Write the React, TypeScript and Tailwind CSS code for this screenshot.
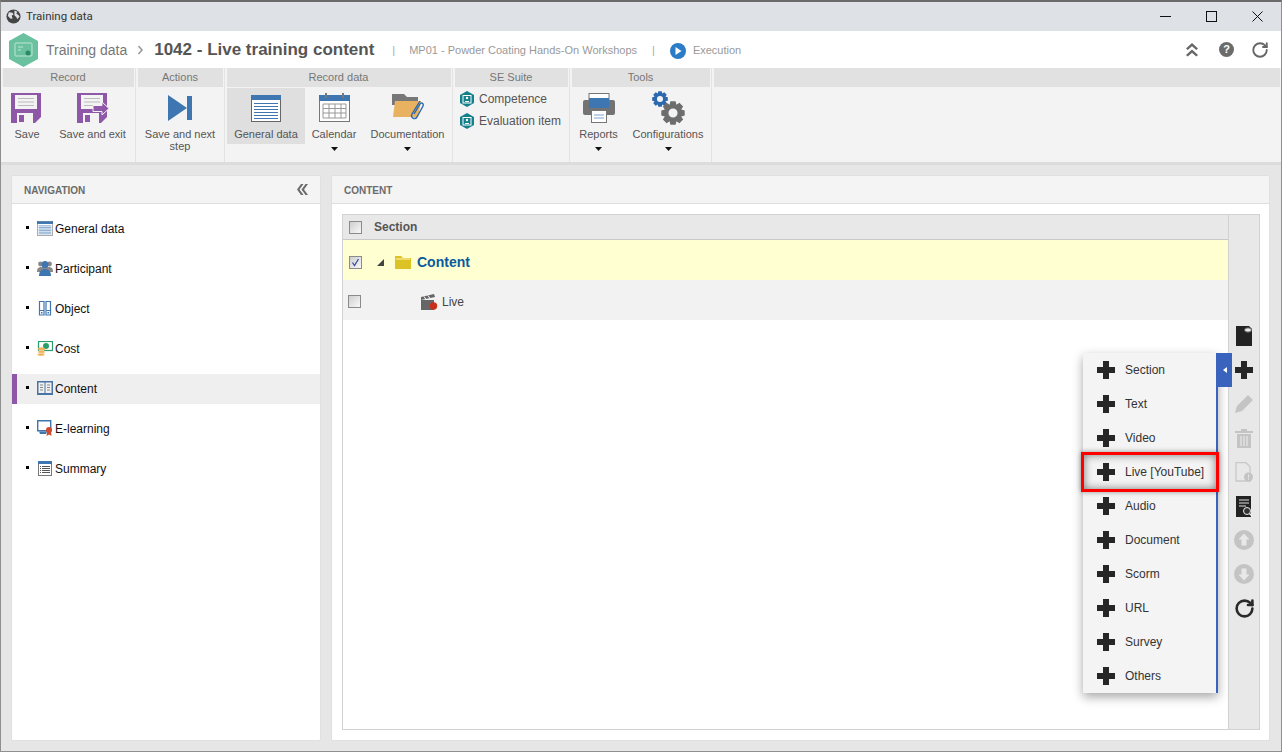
import React from 'react';
import { RotateCw } from 'lucide-react';

const Caret = () => (
  <svg width="7" height="4" viewBox="0 0 7 4" className="mt-[7px]"><path d="M0 0h7L3.5 4z" fill="#111" /></svg>
);

const SaveIcon = ({ exit }: { exit?: boolean }) => (
  <svg width="32" height="30" viewBox="0 0 32 30">
    <path d="M0 0h30v24l-6 6H0z" fill="#8e57a8" />
    <rect x="4" y="2" width="22" height="14" fill="#f3f3f3" />
    <path d="M7 5.500h16M7 9h16M7 12.500h16" stroke="#bbb" strokeWidth="1" />
    <rect x="6" y="20" width="16" height="10" fill="#f3f3f3" />
    <rect x="8" y="22" width="5" height="7" fill="#8e57a8" />
    {exit && <path d="M16 12.500h9v-3.500l7 6.500-7 6.500v-3.500h-9z" fill="#8e57a8" stroke="#f3f3f3" strokeWidth="1" />}
  </svg>
);

const DataIcon = ({ w = 30, h = 27 }: { w?: number; h?: number }) => (
  <svg width={w} height={h} viewBox="0 0 30 27">
    <rect x="0.5" y="0.5" width="29" height="26" fill="#fff" stroke="#666" />
    <rect width="30" height="5" fill="#3d76b0" />
    <path d="M3 8.500h24M3 11.500h24M3 14.500h24M3 17.500h24M3 20.500h24M3 23.500h24" stroke="#3d76b0" strokeWidth="1.200" />
  </svg>
);

const CalendarIcon = () => (
  <svg width="31" height="29" viewBox="0 0 31 29">
    <rect x="0.5" y="2.500" width="30" height="26" fill="#fff" stroke="#777" />
    <rect y="2" width="31" height="6" fill="#3d76b0" />
    <path d="M7 0v5M24 0v5" stroke="#777" strokeWidth="2" />
    <path d="M4 11h23v14H4zM4 15.500h23M4 20h23M10 11v14M16 11v14M22 11v14" fill="none" stroke="#999" />
  </svg>
);

const DocumentationIcon = () => (
  <svg width="32" height="30" viewBox="0 0 32 30">
    <path d="M0 1h12l3 3h11v8H0z" fill="#777" />
    <path d="M3 8h26l-3 16H1z" fill="#e8b261" />
    <path d="M28 8l-8 13c-2 4 3 6 5 3l6-11c1-3-2-4-3-2l-6 10" fill="none" stroke="#2c68ad" strokeWidth="1.400" />
  </svg>
);

const BadgeIcon = () => (
  <svg width="14" height="16" viewBox="0 0 14 16">
    <path d="M7 0l7 4v8l-7 4-7-4V4z" fill="#13808c" />
    <rect x="3" y="4.500" width="8" height="7.500" fill="none" stroke="#fff" />
    <circle cx="7" cy="7" r="1.200" fill="#fff" />
    <path d="M5 10.500h4" stroke="#fff" />
  </svg>
);

const PrinterIcon = () => (
  <svg width="32" height="30" viewBox="0 0 32 30">
    <rect y="7" width="32" height="15" rx="2" fill="#737373" />
    <rect x="6" y="0.500" width="20" height="6" fill="#fff" stroke="#777" />
    <rect x="6" y="5" width="20" height="10" fill="#3d76b0" />
    <rect x="8.500" y="17.500" width="15" height="12" fill="#fff" stroke="#777" />
    <path d="M11 22h10M11 25h10" stroke="#7fa6cf" />
  </svg>
);

// toothed wheel outline, hole cut out with evenodd
const gearPath = (cx: number, cy: number, r: number, teeth: number) => {
  const inner = r * 0.74;
  const hole = r * 0.38;
  const step = (Math.PI * 2) / teeth;
  const pts: string[] = [];
  for (let i = 0; i < teeth; i++) {
    const a = i * step;
    [[inner, -0.5], [r, -0.28], [r, 0.28], [inner, 0.5]].forEach(([rad, k]) => {
      const t = a + k * step;
      pts.push(`${(cx + rad * Math.cos(t)).toFixed(2)} ${(cy + rad * Math.sin(t)).toFixed(2)}`);
    });
  }
  const circle = `M${cx + hole} ${cy}a${hole} ${hole} 0 1 0 ${-2 * hole} 0a${hole} ${hole} 0 1 0 ${2 * hole} 0z`;
  return `M${pts.join('L')}z${circle}`;
};

const ConfigIcon = () => (
  <svg width="33" height="34" viewBox="0 0 33 34">
    <path d={gearPath(8, 8, 8, 8)} fill="#2c68ad" fillRule="evenodd" />
    <path d={gearPath(21, 22, 12, 8)} fill="#6d6d6d" fillRule="evenodd" />
  </svg>
);

const Group = ({ title, width, children, last }: { title: string; width: string; children?: React.ReactNode; last?: boolean }) => (
  <div className={`flex flex-col shrink-0 ${width} ${last ? 'grow' : 'border-r border-[#e3e3e3]'}`}>
    <div className="h-[19px] shrink-0 mx-[1.5px] bg-[#e1e1e1] flex items-center justify-center text-[11px] text-[#777]">{title}</div>
    <div className="flex flex-1 items-start">{children}</div>
  </div>
);

const RibbonBtn = ({ icon, label, width, caret, active }: { icon: React.ReactNode; label: React.ReactNode; width: string; caret?: boolean; active?: boolean }) => (
  <div className={`flex flex-col items-center shrink-0 text-[11px] text-[#555] ${width}`}>
    <div className={`w-full flex flex-col items-center ${active ? 'bg-[#dfdfdf] h-[56px] mt-[1px]' : ''}`}>
      <div className={`${active ? 'h-[40px]' : 'h-[41px]'} flex items-center justify-center`}>{icon}</div>
      <div className="whitespace-nowrap text-center leading-[12px]">{label}</div>
    </div>
    {caret && <Caret />}
  </div>
);

const navIcons: Record<string, React.ReactNode> = {
  'General data': <DataIcon w={16} h={15} />,
  Participant: (
    <svg width="16" height="16" viewBox="0 0 16 16">
      <circle cx="3.500" cy="4" r="2.400" fill="#888" /><circle cx="12.500" cy="4" r="2.400" fill="#888" />
      <path d="M0 11c0-3 2-4 4-4h8c2 0 4 1 4 4v1H0z" fill="#888" />
      <circle cx="8" cy="4.500" r="3.500" fill="#3d76b0" /><path d="M2 16c0-5 3-7 6-7s6 2 6 7z" fill="#3d76b0" />
    </svg>
  ),
  Object: (
    <svg width="16" height="15" viewBox="0 0 16 15">
      <path d="M2.500.5h4.500v13.500H2.500zM9 .5h4.500v13.500H9z" fill="#fff" stroke="#3d76b0" strokeWidth="1.200" />
      <path d="M3 9.500h4M9.500 9.500h4" stroke="#3d76b0" /><rect x="4" y="11" width="1.500" height="1.500" fill="#3d76b0" /><rect x="10.500" y="11" width="1.500" height="1.500" fill="#3d76b0" />
    </svg>
  ),
  Cost: (
    <svg width="16" height="15" viewBox="0 0 16 15">
      <rect x="1.500" y="0.500" width="14" height="9" fill="#fff" stroke="#2a9d6a" strokeWidth="1.200" />
      <circle cx="9" cy="5" r="3" fill="#2a9d6a" />
      <ellipse cx="4.500" cy="8" rx="3.500" ry="1.700" fill="#eeb058" /><ellipse cx="4.500" cy="11" rx="3.500" ry="1.700" fill="#eeb058" stroke="#fff" strokeWidth=".5" /><ellipse cx="4" cy="13.500" rx="3.500" ry="1.500" fill="#eeb058" stroke="#fff" strokeWidth=".5" />
    </svg>
  ),
  Content: (
    <svg width="16" height="14" viewBox="0 0 16 14">
      <rect width="16" height="14" fill="#4a74a3" /><rect x="1.500" y="1.500" width="6" height="10.500" fill="#f0f0f0" /><rect x="8.500" y="1.500" width="6" height="10.500" fill="#f0f0f0" />
      <path d="M3 4h3M3 6.500h3M3 9h3M10 4h3M10 6.500h3M10 9h3" stroke="#888" />
    </svg>
  ),
  'E-learning': (
    <svg width="16" height="16" viewBox="0 0 16 16">
      <path d="M.7.7h13v10h-13z" fill="#fff" stroke="#3d76b0" strokeWidth="1.400" /><path d="M2 11.500h8l-1 2.500H3z" fill="#3d76b0" />
      <circle cx="12" cy="10" r="3" fill="#cf4a2e" /><path d="M10 12l-.5 4 2.500-1.500 2.500 1.500-.5-4z" fill="#cf4a2e" />
    </svg>
  ),
  Summary: (
    <svg width="14" height="15" viewBox="0 0 14 15">
      <rect x=".5" y=".5" width="13" height="14" fill="#fff" stroke="#777" /><rect width="14" height="3" fill="#3d76b0" />
      <path d="M4 5.500h8M4 7.500h8M4 9.500h8M4 11.500h8M2 5.500h1M2 7.500h1M2 9.500h1M2 11.500h1" stroke="#555" />
    </svg>
  ),
};

const navItems = ['General data', 'Participant', 'Object', 'Cost', 'Content', 'E-learning', 'Summary'];

const menuItems = ['Section', 'Text', 'Video', 'Live [YouTube]', 'Audio', 'Document', 'Scorm', 'URL', 'Survey', 'Others'];

const PlusIcon = ({ color = '#262626' }: { color?: string }) => (
  <svg width="18" height="18" viewBox="0 0 18 18"><path d="M6 0h6v6h6v6h-6v6H6v-6H0V6h6z" fill={color} /></svg>
);

const SideBtn = ({ children }: { children: React.ReactNode }) => (
  <div className="h-[34px] flex items-center justify-center">{children}</div>
);

const Check = ({ checked }: { checked?: boolean }) => (
  <div className="w-[13px] h-[13px] border border-[#8a8a8a] bg-gradient-to-br from-[#cfcfcf] to-[#f8f8f8] flex items-center justify-center shrink-0">
    {checked && (
      <svg width="9" height="9" viewBox="0 0 9 9"><path d="M1.500 4.500l2 3 4-6.500" fill="none" stroke="#3a4fa0" strokeWidth="1.300" /></svg>
    )}
  </div>
);

export default function App() {
  return (
    <div className="relative w-[1282px] h-[752px] overflow-hidden bg-[#e6e6e6] border-l border-r border-b border-t-2 border-[#8f8f8f] border-t-[#6a6a6a] flex flex-col font-['Liberation_Sans',sans-serif]">
      {/* title bar */}
      <div className="h-[29px] shrink-0 bg-[#dee1e6] flex items-center pl-[5px]">
        <svg width="15" height="15" viewBox="0 0 16 16">
          <circle cx="8" cy="8" r="7.500" fill="#444" />
          <path d="M3 3.500l4 .5 1 2-2 1 1 3-2 .5-3-3zM9 1.500l3 1.500-1 2 2 1 1.500 2-2.500 3-1-2.500-2-1.500z" fill="#dee1e6" />
        </svg>
        <span className="ml-[5px] text-[11.500px] text-[#333] font-['Roboto',sans-serif]">Training data</span>
        <div className="ml-auto flex items-center">
          <div className="w-[46px] flex justify-center">
            <svg width="11" height="11" viewBox="0 0 11 11" shapeRendering="crispEdges"><path d="M0 5.500h11" stroke="#111" /></svg>
          </div>
          <div className="w-[46px] flex justify-center">
            <svg width="11" height="11" viewBox="0 0 11 11" shapeRendering="crispEdges"><rect x=".5" y=".5" width="10" height="10" fill="none" stroke="#111" /></svg>
          </div>
          <div className="w-[46px] flex justify-center">
            <svg width="11" height="11" viewBox="0 0 11 11"><path d="M.5.5l10 10M10.500.5l-10 10" stroke="#111" /></svg>
          </div>
          <div className="w-[1px]" />
        </div>
      </div>

      {/* header */}
      <div className="h-[37px] shrink-0 bg-white flex items-center pl-[7px]">
        <svg width="31" height="34" viewBox="0 0 31 34">
          <path d="M15.500 0L30 8v18l-14.500 8L1 26V8z" fill="#69c19f" />
          <rect x="7" y="10" width="17" height="13" rx="1" fill="none" stroke="#bfe6d6" />
          <path d="M10 14h5M10 17h3" stroke="#bfe6d6" />
          <circle cx="20" cy="20" r="2.500" fill="#2e8a66" />
        </svg>
        <span className="ml-[7px] mt-[1px] text-[14px] text-[#777]">Training data</span>
        <svg className="ml-[10px]" width="7" height="10" viewBox="0 0 7 10"><path d="M1.500 1l3.500 4-3.500 4" fill="none" stroke="#999" strokeWidth="1.600" /></svg>
        <span className="ml-[10px] text-[17px] font-bold text-[#555]">1042 - Live training content</span>
        <span className="ml-[18px] mt-[2px] text-[11px] text-[#aaa]">|</span>
        <span className="ml-[14px] mt-[2px] text-[11px] text-[#999]">MP01 - Powder Coating Hands-On Workshops</span>
        <span className="ml-[15px] mt-[2px] text-[11px] text-[#aaa]">|</span>
        <svg className="ml-[15px] mt-[2px]" width="16" height="16" viewBox="0 0 16 16"><circle cx="8" cy="8" r="8" fill="#2a7cc7" /><path d="M5.500 4l6 4-6 4z" fill="#fff" /></svg>
        <span className="ml-[7px] mt-[2px] text-[11px] text-[#999]">Execution</span>
        <div className="ml-auto flex items-center text-[#666] pr-[12px]">
          <svg width="12" height="14" viewBox="0 0 12 14"><path d="M6 0l6 5.500-1.700 1.600L6 3.200 1.700 7.100 0 5.500zM6 6.500l6 5.500-1.700 1.600L6 9.700l-4.300 3.900L0 12z" fill="#666" />
          </svg>
          <div className="ml-[21px] w-[15px] h-[15px] rounded-full bg-[#6b6b6b] text-white text-[11px] font-bold flex items-center justify-center">?</div>
          <RotateCw className="ml-[17px]" size={18} strokeWidth={2.500} />
        </div>
      </div>

      {/* ribbon */}
      <div className="h-[97px] shrink-0 bg-[#f3f3f3] border-b-[3px] border-[#dcdcdc] flex">
        <Group title="Record" width="w-[135px]">
          <RibbonBtn width="w-[52px]" label="Save" icon={<SaveIcon />} />
          <RibbonBtn width="w-[79px]" label="Save and exit" icon={<SaveIcon exit />} />
        </Group>
        <Group title="Actions" width="w-[89px]">
          <RibbonBtn width="w-[88px]" label={<>Save and next<br />step</>} icon={
            <svg width="24" height="26" viewBox="0 0 24 26"><path d="M0 0l19 13L0 26z" fill="#3d76b0" /><rect x="19" y="1" width="5" height="24" fill="#3d76b0" /></svg>
          } />
        </Group>
        <Group title="Record data" width="w-[228px]">
          <div className="ml-[2px]">
            <RibbonBtn active width="w-[78px]" label="General data" icon={<DataIcon />} />
          </div>
          <RibbonBtn caret width="w-[58px]" label="Calendar" icon={<CalendarIcon />} />
          <RibbonBtn caret width="w-[89px]" label="Documentation" icon={<DocumentationIcon />} />
        </Group>
        <Group title="SE Suite" width="w-[117px]">
          <div className="pl-[7px] pt-[4px] text-[12px] text-[#555] flex flex-col gap-[6px]">
            <div className="flex items-center gap-[5px] h-[16px]"><BadgeIcon /><span>Competence</span></div>
            <div className="flex items-center gap-[5px] h-[16px]"><BadgeIcon /><span>Evaluation item</span></div>
          </div>
        </Group>
        <Group title="Tools" width="w-[142px]">
          <RibbonBtn caret width="w-[57px]" label="Reports" icon={<PrinterIcon />} />
          <RibbonBtn caret width="w-[82px]" label="Configurations" icon={<ConfigIcon />} />
        </Group>
        <Group title="" width="w-auto" last />
      </div>

      {/* body */}
      <div className="flex-1 flex gap-[10px] pl-[10px] pr-[11px] pt-[10px] pb-[10px] min-h-0">
        <div className="w-[310px] shrink-0 bg-white rounded-[2px] border border-[#e0e0e0] flex flex-col">
          <div className="h-[28px] bg-[#f4f4f4] border-b border-[#dedede] flex items-center justify-between pl-[12px] pr-[12px]">
            <span className="text-[10px] font-bold text-[#6b6b6b] mt-[1px]">NAVIGATION</span>
            <svg width="13" height="11" viewBox="0 0 13 11"><path d="M6 0h2.500L4.500 5.500l4 5.500H6L2 5.500zM10.500 0H13L9 5.500l4 5.500h-2.500l-4-5.500z" fill="#6b6b6b" /></svg>
          </div>
          <div className="pt-[5px]">
            {navItems.map((n) => (
              <div key={n} className="h-[40px] flex items-center">
                <div className={`w-full h-[30px] flex items-center text-[12px] text-[#111] ${n === 'Content' ? 'bg-[#efefef] border-l-[5px] border-[#8e57a8] pl-[9px]' : 'pl-[14px]'}`}>
                  <span className="w-[3px] h-[3px] bg-black mr-[7px] mb-[3px] shrink-0" />
                  <span className="w-[18px] mr-[1px] flex justify-center shrink-0 mb-[2px]">{navIcons[n]}</span>
                  <span>{n}</span>
                </div>
              </div>
            ))}
          </div>
        </div>

        <div className="flex-1 min-w-0 bg-white rounded-[2px] border border-[#e0e0e0] flex flex-col">
          <div className="h-[28px] bg-[#f4f4f4] border-b border-[#dedede] flex items-center pl-[12px]">
            <span className="text-[10px] font-bold text-[#6b6b6b] mt-[1px]">CONTENT</span>
          </div>
          <div className="flex-1 ml-[10px] mr-[9px] my-[10px] border border-[#d2d2d2] flex min-h-0">
            <div className="flex-1 min-w-0 flex flex-col">
              <div className="h-[25px] bg-[#e8e8e8] border-b border-[#c9c9c9] flex items-center pl-[6px] text-[12px] font-bold text-[#555]">
                <Check />
                <span className="ml-[12px]">Section</span>
              </div>
              <div className="h-[40px] bg-[#ffffd2] flex items-center pl-[6px] pt-[4px]">
                <Check checked />
                <svg className="ml-[15px]" width="7" height="7" viewBox="0 0 7 7"><path d="M7 0v7H0z" fill="#444" /></svg>
                <svg className="ml-[11px]" width="16" height="13" viewBox="0 0 16 13"><path d="M0 0h6l2 2h8v11H0z" fill="#dcc224" /><path d="M1 3h14" stroke="#fff6b0" /></svg>
                <span className="ml-[6px] text-[14px] font-bold text-[#0b5a9e]">Content</span>
              </div>
              <div className="h-[40px] bg-[#f2f2f2] flex items-center pl-[5px] pt-[3px]">
                <Check />
                <svg className="ml-[60px]" width="17" height="16" viewBox="0 0 17 16">
                  <path d="M0 6h13v10H0z" fill="#666" />
                  <path d="M0 3l13-3 1 3-14 3z" fill="#666" /><path d="M3 2.500l2 3M7 1.500l2 3" stroke="#fff" />
                  <circle cx="12.500" cy="12" r="3.700" fill="#c9301c" />
                </svg>
                <span className="ml-[4px] text-[12px] text-[#444]">Live</span>
              </div>
            </div>
            {/* right toolbar */}
            <div className="w-[31px] shrink-0 bg-[#e8e8e8] border-l border-[#d2d2d2] flex flex-col pt-[104px]">
              <SideBtn>
                <svg width="18" height="20" viewBox="0 0 18 20">
                  <path d="M1 0h13l3 3v17H1z" fill="#222" />
                  <ellipse cx="13" cy="4" rx="3.500" ry="2.200" fill="#e8e8e8" stroke="#555" />
                </svg>
              </SideBtn>
              <SideBtn><PlusIcon /></SideBtn>
              <SideBtn>
                <svg width="18" height="18" viewBox="0 0 18 18"><path d="M13 0l5 5-11 11-7 2 2-7z" fill="#c4c4c4" /></svg>
              </SideBtn>
              <SideBtn>
                <svg width="18" height="20" viewBox="0 0 18 20"><path d="M0 3h6V1h6v2h6v2H0zM2 6h14v14H2z" fill="#c4c4c4" /><path d="M6 8v10M9 8v10M12 8v10" stroke="#e8e8e8" strokeWidth="1.200" /></svg>
              </SideBtn>
              <SideBtn>
                <svg width="18" height="20" viewBox="0 0 18 20"><path d="M1 .7h10l4 4V19H1z" fill="none" stroke="#c8c8c8" strokeWidth="1.300" /><circle cx="13.500" cy="15" r="4.500" fill="#c4c4c4" /><path d="M13.500 12.500v3M13.500 16.500v1.200" stroke="#e8e8e8" /></svg>
              </SideBtn>
              <SideBtn>
                <svg width="18" height="21" viewBox="0 0 18 21"><path d="M1 0h15v21H1z" fill="#222" /><path d="M4 4h10M4 7h10M4 10h7" stroke="#ddd" /><circle cx="12" cy="15" r="3.500" fill="#333" stroke="#eee" /><path d="M14.500 17.500l3 3" stroke="#eee" strokeWidth="1.500" /></svg>
              </SideBtn>
              <SideBtn>
                <svg width="20" height="20" viewBox="0 0 20 20"><circle cx="10" cy="10" r="10" fill="#c4c4c4" /><path d="M10 3.500l5.500 6H12.500v6h-5v-6H4.500z" fill="#e8e8e8" /></svg>
              </SideBtn>
              <SideBtn>
                <svg width="20" height="20" viewBox="0 0 20 20"><circle cx="10" cy="10" r="10" fill="#c4c4c4" /><path d="M10 16.500l5.500-6H12.500v-6h-5v6H4.500z" fill="#e8e8e8" /></svg>
              </SideBtn>
              <SideBtn><RotateCw size={21} strokeWidth={3} className="text-[#2a2a2a]" /></SideBtn>
            </div>
          </div>
        </div>
      </div>

      {/* add menu */}
      <div className="absolute left-[1082px] top-[351px] w-[135px] bg-[#f4f4f4] border-r-2 border-[#3a63bd] shadow-[0_4px_10px_rgba(0,0,0,0.35)]">
        {menuItems.map((m) => (
          <div key={m} className="h-[34px] flex items-center pl-[14px] text-[12px] text-[#333]">
            <PlusIcon />
            <span className="ml-[10px] -mt-[1px]">{m}</span>
          </div>
        ))}
      </div>
      <div className="absolute left-[1216px] top-[351px] w-[15px] h-[34px] bg-[#3a63bd] flex items-center justify-center">
        <svg width="4" height="6" viewBox="0 0 4 6"><path d="M4 0v6L0 3z" fill="#fff" /></svg>
      </div>
      <div className="absolute left-[1080px] top-[450px] w-[138px] h-[40px] border-[3px] border-[#ff0000] shadow-[inset_0_0_9px_rgba(0,0,0,0.5),0_0_5px_rgba(0,0,0,0.4)]" />
    </div>
  );
}
